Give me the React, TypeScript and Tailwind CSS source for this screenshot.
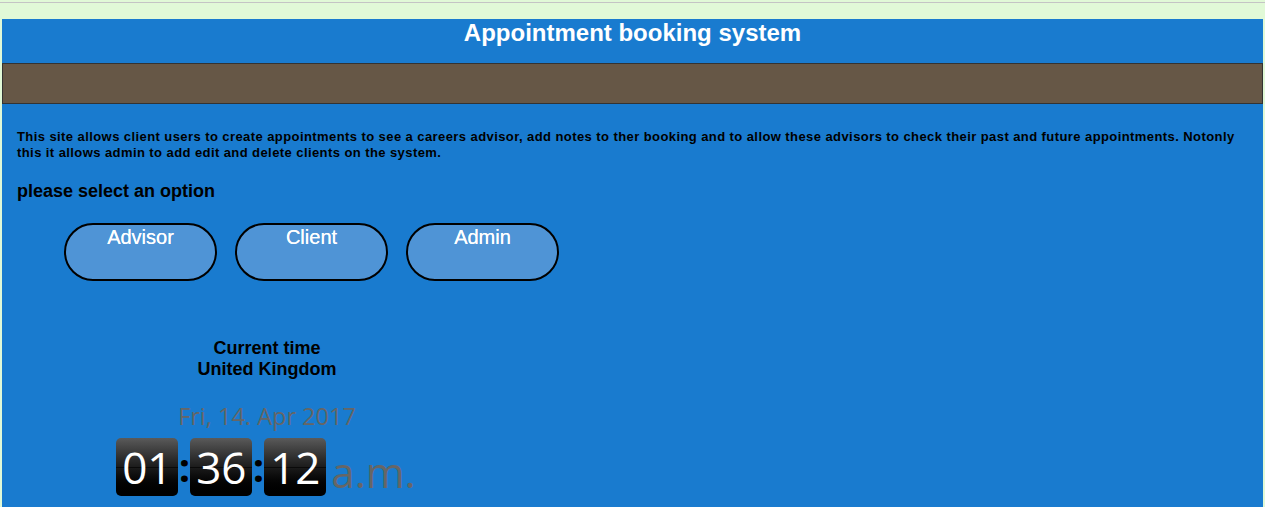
import React from 'react';

const roles = ['Advisor', 'Client', 'Admin'];

const Digit: React.FC<{ value: string }> = ({ value }) => (
  <div className="relative flex h-[58px] w-[62px] items-center justify-center rounded-[5px] bg-gradient-to-b from-[#5a5a5a] via-[#1c1c1c] to-[#000000]">
    <div className="absolute left-0 right-0 top-[29px] h-px bg-black/60" />
    <span className="relative text-[44px] leading-[50px] text-white [font-family:'Open_Sans',sans-serif]">{value}</span>
  </div>
);

const Colon = () => (
  <span className="w-[12px] text-center text-[40px] font-bold leading-none text-black [font-family:'Open_Sans',sans-serif]">:</span>
);

const App: React.FC = () => {
  return (
    <div className="min-h-[507px] bg-[#e1f9d7] [font-family:'Liberation_Sans',Arial,sans-serif]">
      <div className="h-[2px]" />
      <div className="h-px bg-[#c4c4c4]" />
      <div className="h-[16px]" />
      <div className="ml-[2px] mr-[2px] min-h-[488px] bg-[#197bcf] pb-[10px]">
        <header className="h-[44px] pt-[1px] text-center">
          <h1 className="text-[24px] font-bold leading-[26px] text-white">Appointment booking system</h1>
        </header>
        <div className="h-[41px] border border-[#333333] bg-[#665746]" />

        <div className="px-[15px]">
          <p className="mt-[25px] text-[13px] font-bold leading-[16px] tracking-[0.42px] text-black">
            This site allows client users to create appointments to see a careers advisor, add notes to ther booking and to allow these advisors to check their past and future appointments. Notonly this it allows admin to add edit and delete clients on the system.
          </p>
          <h2 className="mt-[20px] text-[18px] font-bold leading-[20px] text-black">please select an option</h2>

          <div className="ml-[47px] mt-[22px] flex gap-[18px]">
            {roles.map((r) => (
              <button
                key={r}
                className="h-[58px] w-[153px] rounded-full border-2 border-black bg-[#4f94d6] text-[20px] leading-[22px] text-white [font-family:'Liberation_Sans',Arial,sans-serif] [text-shadow:0_0_0.6px_#fff]"
              >
                <span className="block -mt-[26px]">{r}</span>
              </button>
            ))}
          </div>

          <div className="mt-[57px] w-[500px] text-center">
            <p className="text-[18px] font-bold leading-[21px] text-black">
              Current time
              <br />
              United Kingdom
            </p>
            <p className="mt-[23px] text-[23.5px] leading-[26px] text-[#666666] [font-family:'Open_Sans',sans-serif]">Fri, 14. Apr 2017</p>
            <div className="mt-[9px] flex items-center justify-center pr-[2px]">
              <Digit value="01" />
              <Colon />
              <Digit value="36" />
              <Colon />
              <Digit value="12" />
              <span className="ml-[5px] mt-[10px] text-[42px] leading-none text-[#666666] [font-family:'Open_Sans',sans-serif]">a.m.</span>
            </div>
          </div>
        </div>
      </div>
    </div>
  );
};

export default App;
